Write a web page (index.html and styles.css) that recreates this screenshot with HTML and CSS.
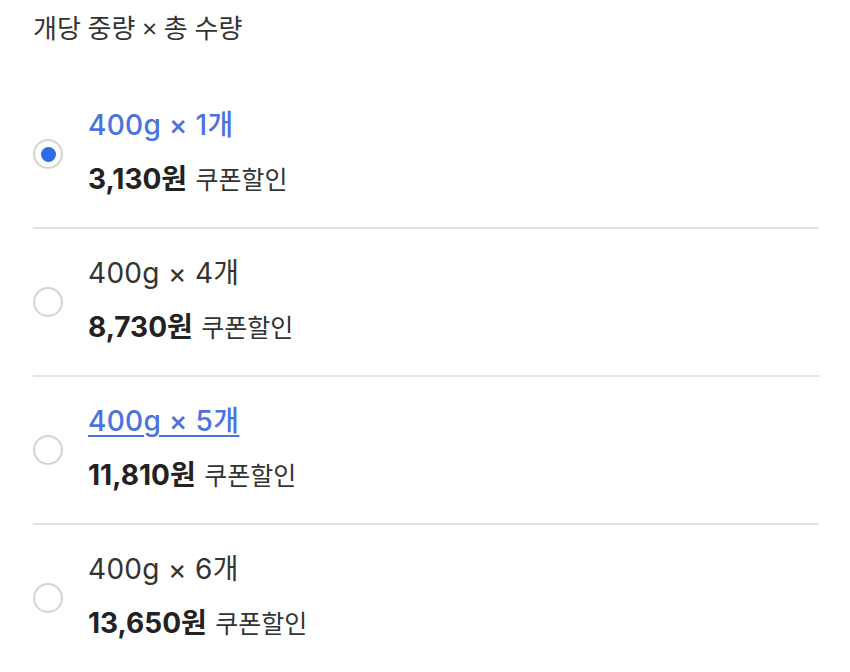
FILE: index.html
```html
<!DOCTYPE html>
<html lang="ko">
<head>
<meta charset="utf-8">
<title>옵션 선택</title>
<link rel="stylesheet" href="styles.css">
</head>
<body>
<section class="options">
  <h2 class="options-title">개당 중량 × 총 수량</h2>
  <ul class="option-list">
    <li class="option">
      <label class="option-label">
        <input class="radio" type="radio" name="qty" checked>
        <span class="option-body">
          <span class="option-name is-active">400g × 1개</span>
          <span class="option-price"><b>3,130원</b> 쿠폰할인</span>
        </span>
      </label>
    </li>
    <li class="option">
      <label class="option-label">
        <input class="radio" type="radio" name="qty">
        <span class="option-body">
          <span class="option-name">400g × 4개</span>
          <span class="option-price"><b>8,730원</b> 쿠폰할인</span>
        </span>
      </label>
    </li>
    <li class="option">
      <label class="option-label">
        <input class="radio" type="radio" name="qty">
        <span class="option-body">
          <span class="option-name is-hover">400g × 5개</span>
          <span class="option-price"><b>11,810원</b> 쿠폰할인</span>
        </span>
      </label>
    </li>
    <li class="option">
      <label class="option-label">
        <input class="radio" type="radio" name="qty">
        <span class="option-body">
          <span class="option-name">400g × 6개</span>
          <span class="option-price"><b>13,650원</b> 쿠폰할인</span>
        </span>
      </label>
    </li>
  </ul>
</section>
</body>
</html>
```
FILE: styles.css
```css
* { box-sizing: border-box; }

html, body {
  margin: 0;
  padding: 0;
  background: #ffffff;
}

body {
  font-family: "Noto Sans", "Noto Sans CJK KR", sans-serif;
  color: #333333;
}

.options {
  width: 786px;
  margin-left: 33px;
  padding-top: 12px;
}

.options-title {
  margin: 0 0 37px;
  font-size: 26px;
  font-weight: 400;
  line-height: 32px;
  color: #333333;
}

.option-list {
  list-style: none;
  margin: 0;
  padding: 0;
}

.option {
  border-bottom: 2px solid #e3e3e3;
}

.option:last-child {
  border-bottom: none;
}

.option-label {
  display: flex;
  align-items: center;
  padding: 26px 0 30px;
  cursor: pointer;
}

.radio {
  appearance: none;
  -webkit-appearance: none;
  flex: none;
  width: 30px;
  height: 30px;
  margin: 4px 25px 0 0;
  border: 2px solid #d4d4d4;
  border-radius: 50%;
  background: #ffffff;
  box-shadow: inset 0 0 1px rgba(0, 0, 0, 0.08);
  display: grid;
  place-items: center;
}

.radio:checked::after {
  content: "";
  width: 15px;
  height: 15px;
  border-radius: 50%;
  background: #2f6de6;
}

.option-body {
  display: flex;
  flex-direction: column;
  gap: 18px;
}

.option-name {
  font-family: "Inter", "Noto Sans CJK KR", sans-serif;
  font-size: 28px;
  line-height: 36px;
  letter-spacing: 0.3px;
  color: #333333;
}

.option-name.is-active,
.option-name.is-hover {
  color: #4a72e0;
  font-weight: 500;
}

.option-name.is-hover {
  text-decoration: underline;
  text-decoration-thickness: 2px;
  text-underline-offset: 4px;
}

.option-price {
  font-size: 25px;
  line-height: 36px;
  color: #333333;
}

.option-price b {
  font-family: "Inter", "Noto Sans CJK KR", sans-serif;
  font-size: 28px;
  font-weight: 700;
  color: #222222;
  margin-right: 2px;
}
```
